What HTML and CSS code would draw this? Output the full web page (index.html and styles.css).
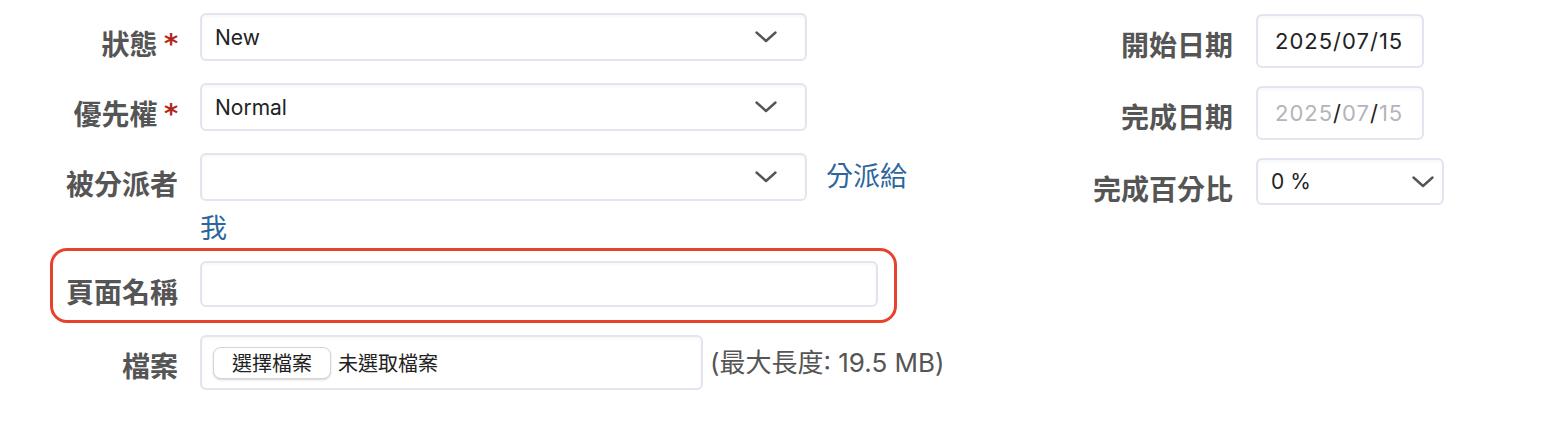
FILE: index.html
```html
<!DOCTYPE html>
<html lang="zh-Hant">
<head>
<meta charset="utf-8">
<title>Issue form</title>
<link rel="stylesheet" href="styles.css">
</head>
<body>
<div class="page">
  <div class="col-left">
    <div class="row row-status">
      <div class="label">狀態 <span class="req">*</span></div>
      <div class="select w-main"><span class="val">New</span><svg class="chev" width="22" height="12" viewBox="0 0 22 12"><path d="M1.5 1.5 L11 10 L20.5 1.5" fill="none" stroke="#555" stroke-width="2.4" stroke-linecap="round" stroke-linejoin="round"/></svg></div>
    </div>
    <div class="row row-priority">
      <div class="label">優先權 <span class="req">*</span></div>
      <div class="select w-main"><span class="val">Normal</span><svg class="chev" width="22" height="12" viewBox="0 0 22 12"><path d="M1.5 1.5 L11 10 L20.5 1.5" fill="none" stroke="#555" stroke-width="2.4" stroke-linecap="round" stroke-linejoin="round"/></svg></div>
    </div>
    <div class="row-assignee">
      <div class="row">
        <div class="label">被分派者</div>
        <div class="select w-main"><span class="val"></span><svg class="chev" width="22" height="12" viewBox="0 0 22 12"><path d="M1.5 1.5 L11 10 L20.5 1.5" fill="none" stroke="#555" stroke-width="2.4" stroke-linecap="round" stroke-linejoin="round"/></svg></div>
        <a class="assign-link" href="#">分派給</a>
      </div>
      <a class="assign-me" href="#">我</a>
    </div>
    <div class="row row-highlight">
      <div class="label label-hl">頁面名稱</div>
      <div class="input w-page"></div>
    </div>
    <div class="row row-file">
      <div class="label">檔案</div>
      <div class="file-box">
        <span class="file-btn">選擇檔案</span>
        <span class="file-none">未選取檔案</span>
      </div>
      <span class="file-note">(最大長度: 19.5 MB)</span>
    </div>
  </div>
  <div class="col-right">
    <div class="row row-start">
      <div class="label label-r">開始日期</div>
      <div class="date"><span>2025</span><span class="sl">/</span><span>07</span><span class="sl">/</span><span>15</span></div>
    </div>
    <div class="row row-due">
      <div class="label label-r">完成日期</div>
      <div class="date date-empty"><span>2025</span><span class="sl">/</span><span>07</span><span class="sl">/</span><span>15</span></div>
    </div>
    <div class="row row-pct">
      <div class="label label-r">完成百分比</div>
      <div class="select select-pct"><span class="val">0 %</span><svg class="chev" width="22" height="12" viewBox="0 0 22 12"><path d="M1.5 1.5 L11 10 L20.5 1.5" fill="none" stroke="#555" stroke-width="2.4" stroke-linecap="round" stroke-linejoin="round"/></svg></div>
    </div>
  </div>
</div>
</body>
</html>
```
FILE: styles.css
```css
* { box-sizing: border-box; }
html, body { margin: 0; padding: 0; background: #fff; }
body {
  font-family: Inter, "Noto Sans CJK TC", sans-serif;
  color: #222;
  width: 1556px;
  height: 426px;
  overflow: hidden;
}
.page { display: flex; align-items: flex-start; }
.col-left { width: 1060px; padding-top: 13px; display: flex; flex-direction: column; }
.col-right { padding-top: 14px; display: flex; flex-direction: column; }

.row { display: flex; align-items: flex-start; }

.label {
  width: 178px;
  margin-right: 22px;
  margin-bottom: -6px;
  text-align: right;
  font-family: "Noto Sans CJK TC", sans-serif;
  font-weight: 700;
  font-size: 28px;
  line-height: 48px;
  padding-top: 6px;
  color: #555;
  white-space: nowrap;
  flex: none;
}
.label-r { width: 173px; margin-right: 23px; }
.req {
  font-family: "DejaVu Sans", sans-serif;
  font-size: 27px;
  line-height: 0;
  color: #b3261e;
  position: relative;
  top: -2px;
}

.select, .input, .date, .file-box {
  border: 2px solid #e1e5ee;
  border-radius: 6px;
  background: #fff;
  box-shadow: inset 0 2px 3px rgba(30, 40, 80, 0.035);
  flex: none;
}
.select {
  height: 48px;
  display: flex;
  align-items: center;
  justify-content: space-between;
  padding: 0 28px 0 13px;
  font-size: 21px;
  color: #222;
}
.select .val { line-height: 1; }
.chev { display: block; flex: none; }
.w-main { width: 607px; }

.row-status { margin-bottom: 22px; }
.row-priority { margin-bottom: 22px; }
.row-assignee { display: flex; flex-direction: column; margin-bottom: 4px; }

.assign-link, .assign-me {
  font-family: "Noto Sans CJK TC", sans-serif;
  font-size: 27px;
  color: #2d669c;
  text-decoration: none;
}
.assign-link { margin-left: 19px; line-height: 44px; }
.assign-me { margin-left: 200px; line-height: 34px; padding-top: 9px; }

.row-highlight {
  margin-left: 50px;
  width: 847px;
  border: 3px solid #e8412c;
  border-radius: 17px;
  padding: 10px 16px 13px 0;
  margin-bottom: 12px;
}
.label-hl { width: 125px; line-height: 46px; padding-top: 7px; margin-bottom: -7px; }
.input { height: 46px; }
.w-page { width: 678px; }

.file-box {
  width: 503px;
  height: 55px;
  display: flex;
  align-items: center;
  padding-left: 11px;
  font-family: "Noto Sans CJK TC", sans-serif;
  font-size: 20px;
  color: #222;
}
.file-btn {
  display: inline-flex;
  align-items: center;
  justify-content: center;
  width: 118px;
  height: 32px;
  border: 1px solid #d6d6d6;
  border-radius: 8px;
  background: #fff;
  box-shadow: 0 1px 2px rgba(0, 0, 0, 0.18);
  margin-right: 7px;
}
.file-note {
  margin-left: 7px;
  font-size: 26px;
  line-height: 55px;
  color: #555;
}

.date {
  width: 168px;
  height: 54px;
  display: flex;
  align-items: center;
  padding-left: 17px;
  font-size: 22px;
  letter-spacing: 1px;
  color: #222;
}
.date-empty { color: #b3b5ba; }
.date-empty .sl { color: #222; }

.row-start { margin-bottom: 18px; }
.row-due { margin-bottom: 18px; }
.select-pct { width: 188px; height: 47px; padding: 0 8px 0 13px; }
```
